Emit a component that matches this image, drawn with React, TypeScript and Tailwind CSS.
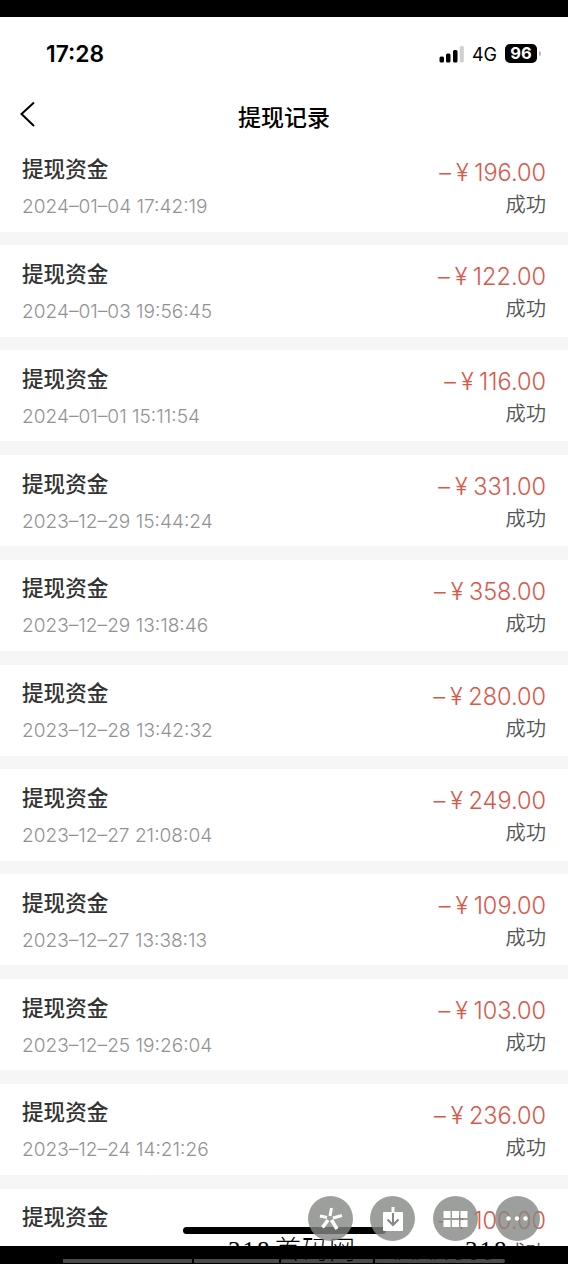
import React from "react";

const records = [
  ["2024–01–04 17:42:19", "196.00"],
  ["2024–01–03 19:56:45", "122.00"],
  ["2024–01–01 15:11:54", "116.00"],
  ["2023–12–29 15:44:24", "331.00"],
  ["2023–12–29 13:18:46", "358.00"],
  ["2023–12–28 13:42:32", "280.00"],
  ["2023–12–27 21:08:04", "249.00"],
  ["2023–12–27 13:38:13", "109.00"],
  ["2023–12–25 19:26:04", "103.00"],
  ["2023–12–24 14:21:26", "236.00"],
];

function Row({ date, amount }: { date: string; amount: string }) {
  return (
    <div className="flex h-[104.8px] shrink-0 flex-col">
      <div className="flex h-[91.2px] justify-between px-[22px]">
        <div className="flex flex-col">
          <span className="mt-[12.500px] text-[21.6px] leading-8 font-medium text-[#333]">提现资金</span>
          <span className="mt-[7px] text-[19.1px] leading-7 font-light whitespace-nowrap text-[#929292]">{date}</span>
        </div>
        <div className="flex flex-col items-end">
          <span className="mt-[16px] flex text-[23.5px] leading-8 font-light whitespace-nowrap text-[#d9584a]">
            <span>–</span>
            <span className="mr-[5.500px] ml-[5px]">¥</span>
            <span>{amount}</span>
          </span>
          <span className="mt-px text-[20.3px] leading-[30px] font-[350] text-[#555]">成功</span>
        </div>
      </div>
      <div className="h-[13.6px] bg-[#f6f6f6]" />
    </div>
  );
}

export default function App() {
  return (
    <div className="relative flex h-[1264px] w-[568px] flex-col overflow-hidden bg-white font-['Inter','Noto_Sans_CJK_SC',sans-serif]">
      <div className="h-[17px] shrink-0 bg-black" />
      <div className="flex h-[73px] shrink-0 items-center justify-between pr-[27px] pl-[46px]">
        <span className="mt-px text-[22.8px] font-semibold text-black">17:28</span>
        <div className="flex items-center">
          <svg width="26" height="18" viewBox="0 0 26 18">
            <rect x="1.500" y="11.500" width="4.5" height="6" rx="1.5" />
            <rect x="8" y="8.500" width="4.5" height="9" rx="1.5" />
            <rect x="15" y="5" width="4.5" height="12.500" rx="1.5" />
            <rect x="21.800" y="1" width="4" height="16.500" rx="1.5" fill="#d2cfd2" />
          </svg>
          <span className="mt-px ml-[8px] text-[18px]">4G</span>
          <span className="ml-[8px] flex h-[19px] w-[32px] items-center justify-center rounded-[5px] bg-black text-[16.5px] font-bold text-white">96</span>
          <span className="ml-[2px] h-[5px] w-[2px] rounded-r bg-[#bbb]" />
        </div>
      </div>
      <header className="flex h-[50.700px] shrink-0 items-center px-5">
        <svg className="-mt-[3px]" width="16" height="26" viewBox="0 0 16 26" fill="none" stroke="black" strokeWidth="2">
          <path d="M14 1.500 L1.500 13 L14 25" />
        </svg>
        <h1 className="mt-[5px] mr-4 flex-1 text-center text-[23px] leading-8 font-medium">提现记录</h1>
      </header>
      <main className="flex flex-col">
        {records.map(([date, amount]) => (
          <Row key={date} date={date} amount={amount} />
        ))}
        <Row date="" amount="100.00" />
      </main>

      <div className="absolute top-[1227px] left-[183px] h-[7px] w-[203px] rounded-full bg-black" />
      <div className="absolute top-[1246px] left-0 h-[18px] w-full bg-black">
        <div className="mt-[13px] ml-[63px] flex h-[4px] w-[442px] gap-[2px]">
          <span className="w-[129px] bg-[#4b4b4b]" />
          <span className="w-[85px] bg-[#4b4b4b]" />
          <span className="w-[92px] bg-[#4b4b4b]" />
          <span className="flex-1 rounded-r bg-[#4b4b4b]" />
        </div>
      </div>
      <div className="absolute top-[1233px] left-[228px] flex items-center font-['Liberation_Serif','Noto_Sans_CJK_SC',serif] text-[25px] leading-9 font-light whitespace-pre">
        <span className="w-[47px] tracking-[2px]">318</span>
        <span className="w-[190px] text-[26px] tracking-[1px]">首码网</span>
        <span className="tracking-[2px]">318</span>
      </div>
      <div className="absolute top-[1246px] left-[392px] font-['Liberation_Serif',serif] text-[15px] leading-[18px] tracking-[7px] whitespace-nowrap text-black">www.318</div>
      <div className="absolute top-[1196px] left-[308px] flex gap-[17.300px]">
        <span className="size-[45px] rounded-full bg-[#858783]/80">
          <svg viewBox="0 0 45 45" fill="none" stroke="white">
            <path d="M23.500 12 L22 20" strokeWidth="3" />
            <path d="M12 20 L19 21.500 M25 22 L34 19.500" strokeWidth="3" />
            <path d="M20 24 L14.500 31.500 M23.500 24 L29 33" strokeWidth="3.500" />
          </svg>
        </span>
        <span className="size-[45px] rounded-full bg-[#858783]/80">
          <svg viewBox="0 0 45 45" fill="none">
            <rect x="13" y="16" width="20" height="19" rx="1" fill="white" />
            <path d="M23 11 V17" stroke="white" strokeWidth="3" />
            <path d="M23 17 V29 M17.500 23.500 L23 29 L28.500 23.500" stroke="#858783" strokeWidth="2" />
          </svg>
        </span>
        <span className="size-[45px] rounded-full bg-[#858783]/80">
          <svg viewBox="0 0 45 45" fill="white">
            <path d="M10.500 15h7v7h-7zM19 15h7v7h-7zM27.500 15h7v7h-7zM10.500 24h7v7h-7zM19 24h7v7h-7zM27.500 24h7v7h-7z" />
          </svg>
        </span>
        <span className="size-[45px] rounded-full bg-[#858783]/80">
          <svg viewBox="0 0 45 45" fill="white">
            <circle cx="13.500" cy="22.500" r="2.200" />
            <circle cx="22" cy="22.500" r="2.200" />
            <circle cx="30.500" cy="22.500" r="2.200" />
          </svg>
        </span>
      </div>
    </div>
  );
}
